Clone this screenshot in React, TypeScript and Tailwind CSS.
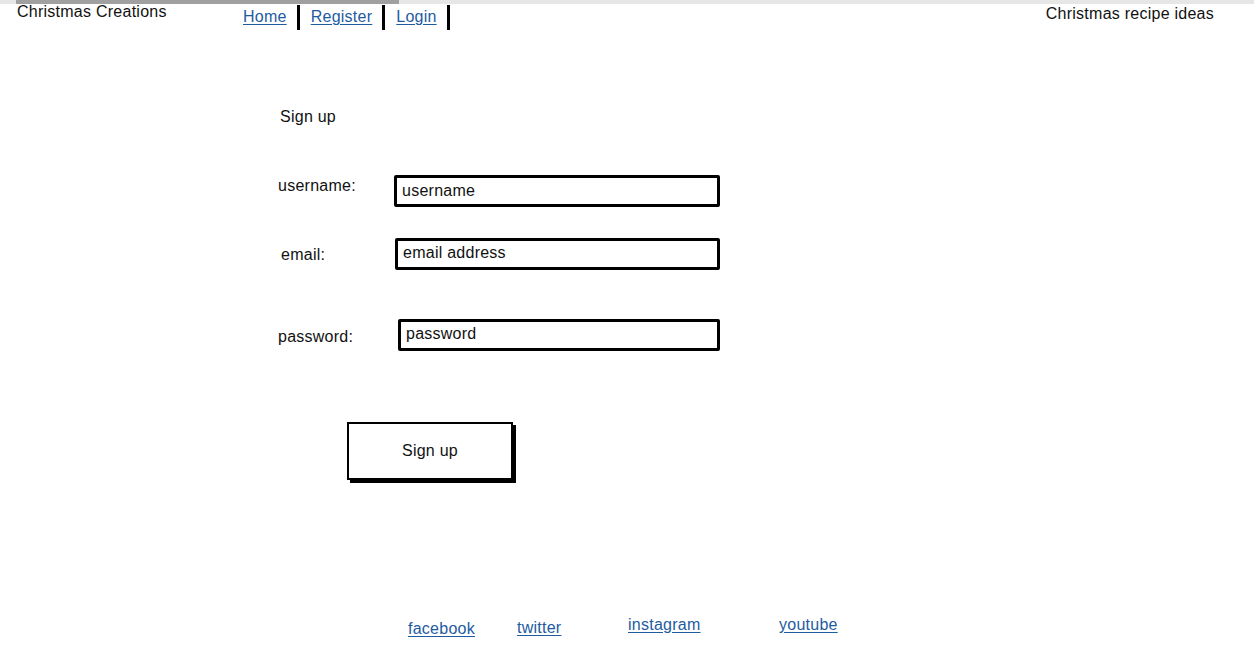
import React from "react";

const font = { fontFamily: '"Liberation Sans", Arial, sans-serif' };

export default function App() {
  return (
    <div className="relative w-[1254px] h-[672px] bg-white overflow-hidden text-[#111] tracking-[0.25px]" style={font}>
      {/* top strip */}
      <div className="h-[4px] w-full bg-[#e6e6e6] flex">
        <div className="ml-[16px] w-[383px] h-full bg-[#a0a0a0]" />
      </div>

      {/* header */}
      <div className="flex items-start h-[26px]">
        <div className="pl-[17px] w-[243px] text-[16px] leading-[16px]">Christmas Creations</div>
        <nav className="flex items-stretch h-[25px] mt-[1px]">
          {["Home", "Register", "Login"].map((t) => (
            <div key={t} className="flex items-start pr-[10px] mr-[11px] border-r-[3px] border-black">
              <a href="#" className="text-[16px] leading-[16px] mt-[4px] text-[#1e5b9f] underline underline-offset-[2px]">
                {t}
              </a>
            </div>
          ))}
        </nav>
        <div className="ml-auto pr-[40px] text-[16px] leading-[16px] mt-[2px]">Christmas recipe ideas</div>
      </div>

      {/* form */}
      <div className="pl-[278px]">
        <div className="pl-[2px] mt-[79px] text-[16px] leading-[16px]">Sign up</div>

        <div className="flex items-start mt-[50px]">
          <div className="w-[116px] text-[16px] leading-[16px] mt-[3px]">username:</div>
          <div className="w-[326px] h-[32px] border-[3px] border-black rounded-[2px] flex items-center pl-[5px] text-[16px]">username</div>
        </div>

        <div className="flex items-start mt-[32px]">
          <div className="w-[117px] pl-[3px] text-[16px] leading-[16px] mt-[8px]">email:</div>
          <div className="w-[325px] h-[32px] border-[3px] border-black rounded-[2px] flex items-center pl-[5px] text-[16px] -mt-[1px]">
            <span className="-mt-[2px]">email address</span>
          </div>
        </div>

        <div className="flex items-start mt-[49px]">
          <div className="w-[120px] text-[16px] leading-[16px] mt-[10px]">password:</div>
          <div className="w-[322px] h-[32px] border-[3px] border-black rounded-[2px] flex items-center pl-[5px] text-[16px]">
            <span className="-mt-[3px]">password</span>
          </div>
        </div>

        <div className="ml-[69px] mt-[71px] w-[166px] h-[58px] border-2 border-black shadow-[3px_3px_0_#000] flex items-center justify-center text-[16px]">
          Sign up
        </div>
      </div>

      {/* footer */}
      <div className="flex items-start pl-[408px] mt-[137px] text-[16px] leading-[16px]">
        <a href="#" className="mt-[4px] text-[#1e5b9f] underline underline-offset-[2px] w-[109px]">facebook</a>
        <a href="#" className="mt-[3px] text-[#1e5b9f] underline underline-offset-[2px] w-[111px]">twitter</a>
        <a href="#" className="text-[#1e5b9f] underline underline-offset-[2px] w-[151px]">instagram</a>
        <a href="#" className="text-[#1e5b9f] underline underline-offset-[2px]">youtube</a>
      </div>
    </div>
  );
}
